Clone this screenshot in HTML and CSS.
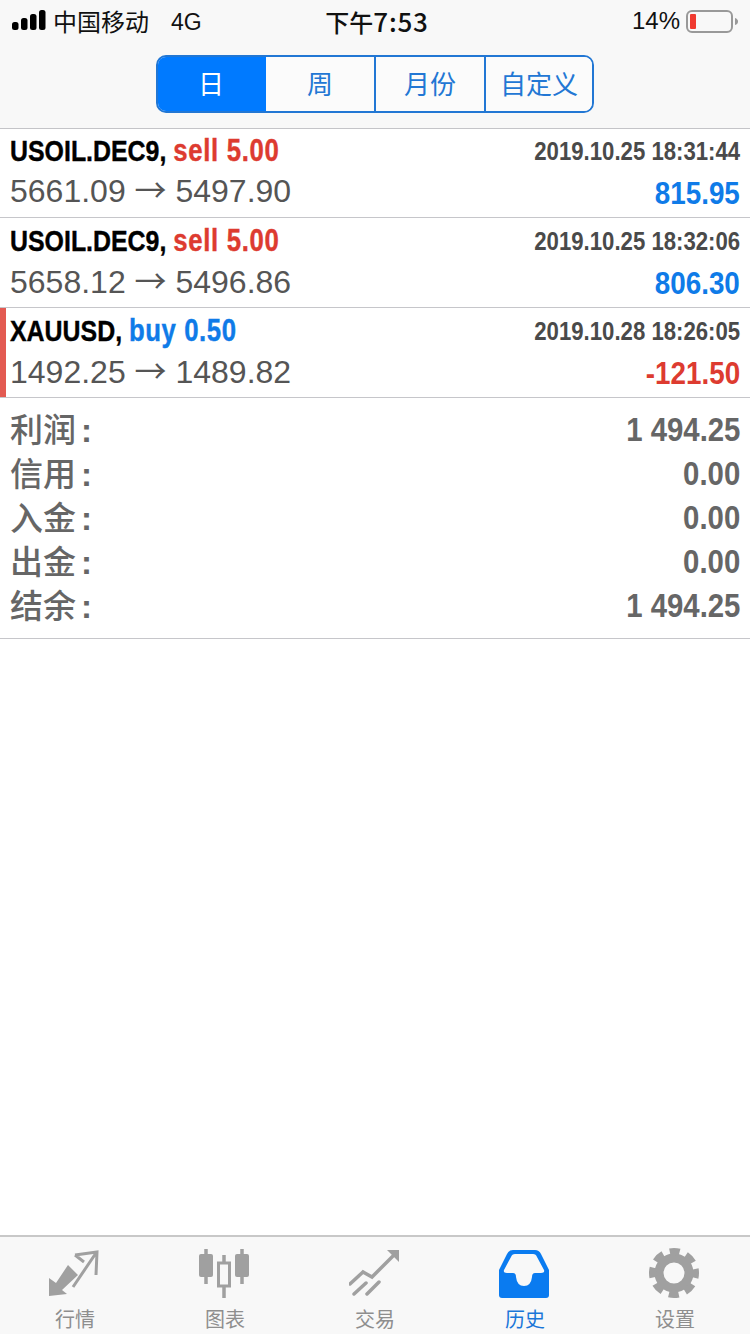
FILE: index.html
```html
<!DOCTYPE html>
<html lang="zh">
<head>
<meta charset="utf-8">
<title>历史</title>
<link rel="stylesheet" href="styles.css">
</head>
<body>
<div class="page">
  <header class="top">
    <div class="status">
      <div class="status-left">
        <svg class="signal" width="34" height="20" viewBox="0 0 34 20"><rect x="0" y="12" width="6.500" height="8" rx="2.500"/><rect x="9" y="8" width="6.500" height="12" rx="2.500"/><rect x="18" y="4" width="6.500" height="16" rx="2.500"/><rect x="27" y="0" width="6.500" height="20" rx="2.500"/></svg>
        <span class="carrier">中国移动</span>
        <span class="net">4G</span>
      </div>
      <div class="clock">下午<span class="clock-num">7:53</span></div>
      <div class="status-right">
        <span class="pct">14%</span>
        <svg class="battery" width="54" height="24" viewBox="0 0 54 24"><rect x="1" y="1" width="45" height="21" rx="5" fill="none" stroke="#999" stroke-width="2"/><rect x="4" y="4" width="6" height="15" rx="1" fill="#f03a30"/><path d="M49 8 Q52 9 52 11.500 Q52 14 49 15Z" fill="#999"/></svg>
      </div>
    </div>
    <nav class="seg">
      <div class="seg-item is-active">日</div>
      <div class="seg-item">周</div>
      <div class="seg-item">月份</div>
      <div class="seg-item">自定义</div>
    </nav>
  </header>
  <main class="main">
    <section class="deal">
      <div class="line">
        <div class="title"><b class="sym">USOIL.DEC9,</b> <b class="sell">sell 5.00</b></div>
        <div class="time">2019.10.25 18:31:44</div>
      </div>
      <div class="line">
        <div class="prices">5661.09 <span class="arrow">→</span> 5497.90</div>
        <div class="profit pos">815.95</div>
      </div>
    </section>
    <section class="deal">
      <div class="line">
        <div class="title"><b class="sym">USOIL.DEC9,</b> <b class="sell">sell 5.00</b></div>
        <div class="time">2019.10.25 18:32:06</div>
      </div>
      <div class="line">
        <div class="prices">5658.12 <span class="arrow">→</span> 5496.86</div>
        <div class="profit pos">806.30</div>
      </div>
    </section>
    <section class="deal is-marked">
      <div class="line">
        <div class="title"><b class="sym">XAUUSD,</b> <b class="buy">buy 0.50</b></div>
        <div class="time">2019.10.28 18:26:05</div>
      </div>
      <div class="line">
        <div class="prices">1492.25 <span class="arrow">→</span> 1489.82</div>
        <div class="profit neg">-121.50</div>
      </div>
    </section>
    <section class="summary">
      <div class="sum-row"><span class="sum-label">利润<i class="colon">:</i></span><span class="sum-value">1 494.25</span></div>
      <div class="sum-row"><span class="sum-label">信用<i class="colon">:</i></span><span class="sum-value">0.00</span></div>
      <div class="sum-row"><span class="sum-label">入金<i class="colon">:</i></span><span class="sum-value">0.00</span></div>
      <div class="sum-row"><span class="sum-label">出金<i class="colon">:</i></span><span class="sum-value">0.00</span></div>
      <div class="sum-row"><span class="sum-label">结余<i class="colon">:</i></span><span class="sum-value">1 494.25</span></div>
    </section>
  </main>
  <footer class="tabs">
    <div class="tab">
      <svg class="tab-icon" width="52" height="50" viewBox="49 1248 52 50"><path d="M49 1296V1278L56 1283 68 1265 78 1275 62 1290 67 1294Z" fill="#a0a0a0"/><path d="M75 1255 97 1252 96 1275M96 1253 73 1287M75 1255 84 1262" fill="none" stroke="#a0a0a0" stroke-width="3"/></svg>
      <span class="tab-label">行情</span>
    </div>
    <div class="tab">
      <svg class="tab-icon" width="52" height="50" viewBox="199 1248 52 50"><path d="M206 1249V1284M242 1249V1284M224 1255V1298" stroke="#a0a0a0" stroke-width="3.500" fill="none"/><rect x="199" y="1254" width="14" height="23" rx="2" fill="#a0a0a0"/><rect x="235" y="1254" width="14" height="23" rx="2" fill="#a0a0a0"/><rect x="218.500" y="1263" width="11" height="23" fill="#f8f8f8" stroke="#a0a0a0" stroke-width="3"/></svg>
      <span class="tab-label">图表</span>
    </div>
    <div class="tab">
      <svg class="tab-icon" width="52" height="50" viewBox="349 1248 52 50"><path d="M350 1284 363 1272 372 1277 394 1255M354 1294 366 1283M367 1294 379 1282" fill="none" stroke="#a0a0a0" stroke-width="3.500" stroke-linecap="round"/><path d="M387 1250H399V1262Z" fill="#a0a0a0"/></svg>
      <span class="tab-label">交易</span>
    </div>
    <div class="tab is-active">
      <svg class="tab-icon" width="52" height="50" viewBox="499 1248 52 50"><path d="M513 1250H535Q539 1250 541 1254L549 1270V1295Q549 1298 546 1298H502Q499 1298 499 1295V1270L507 1254Q509 1250 513 1250Z" fill="#0a7bf0"/><path d="M515 1254H533Q536 1254 537 1257L544 1270Q545 1273 541 1273H535Q532 1273 532 1277 531 1286 524 1286 517 1286 516 1277 516 1273 513 1273H507Q503 1273 504 1270L511 1257Q512 1254 515 1254Z" fill="#f8f8f8"/></svg>
      <span class="tab-label">历史</span>
    </div>
    <div class="tab">
      <svg class="tab-icon" width="52" height="50" viewBox="649 1248 52 50"><circle cx="674" cy="1273" r="15" fill="none" stroke="#a0a0a0" stroke-width="9"/><circle cx="674" cy="1273" r="21.500" fill="none" stroke="#a0a0a0" stroke-width="7" stroke-dasharray="10 6.890" stroke-dashoffset="5"/></svg>
      <span class="tab-label">设置</span>
    </div>
  </footer>
</div>
</body>
</html>
```
FILE: styles.css
```css
* { box-sizing: border-box; }
html, body { margin: 0; padding: 0; }
body {
  background: #fff;
  font-family: "Liberation Sans", "Noto Sans CJK SC", sans-serif;
}
.page {
  width: 750px;
  height: 1334px;
  display: flex;
  flex-direction: column;
  overflow: hidden;
}
.top {
  height: 129px;
  background: #f8f8f8;
  border-bottom: 1px solid #c4c4c8;
  flex: none;
}
.status {
  height: 55px;
  padding: 0 10px 15px 12px;
  display: grid;
  grid-template-columns: 1fr auto 1fr;
  align-items: center;
  color: #111;
}
.status-left { display: flex; align-items: center; }
.signal { fill: #000; margin-right: 7px; }
.carrier { font-family: "Noto Sans CJK SC", sans-serif; font-size: 24px; width: 118px; }
.net { font-size: 23px; margin-top: 4px; }
.clock { font-family: "Noto Sans CJK SC", sans-serif; font-size: 24px; font-weight: 500; padding-left: 2px; }
.clock-num { font-size: 26px; letter-spacing: .8px; }
.status-right { display: flex; justify-content: flex-end; align-items: center; margin-top: 2px; }
.pct { font-size: 24px; margin-right: 6px; }
.battery { margin-top: 2px; }
.seg {
  width: 438px;
  height: 58px;
  margin: 0 auto;
  display: flex;
  border: 2px solid #2277d4;
  border-radius: 10px;
  overflow: hidden;
  font-family: "Noto Sans CJK SC", sans-serif;
  font-size: 26px;
  color: #2277d4;
}
.seg-item {
  flex: 0 0 110px;
  display: flex;
  align-items: center;
  justify-content: center;
  padding-bottom: 3px;
  background: #fbfbfb;
  border-right: 2px solid #2277d4;
}
.seg-item:last-child { flex: 1; border-right: 0; }
.seg-item.is-active { background: #007aff; color: #fff; margin: -2px 0 -2px -2px; border-right: 0; }
.main { flex: 1; background: #fff; }
.deal {
  height: 90px;
  padding: 1px 10px 0;
  position: relative;
  display: flex;
  flex-direction: column;
}
.deal:first-child { height: 89px; padding-top: 0; }
.deal::after {
  content: "";
  position: absolute;
  left: 0;
  right: 0;
  bottom: 0;
  height: 1px;
  background: #c6c6ca;
}
.deal.is-marked::before {
  content: "";
  position: absolute;
  left: 0;
  top: 0;
  bottom: 1px;
  width: 6px;
  background: #e35a52;
}
.line {
  height: 44px;
  display: flex;
  justify-content: space-between;
  align-items: center;
}
.line + .line { height: 38px; }
.deal:first-child .line + .line { height: 36px; }
.title {
  font-size: 30px;
  white-space: pre;
  transform: scaleX(.83);
  transform-origin: left center;
  -webkit-text-stroke: .4px currentColor;
}
.sym { color: #000; }
.sell { color: #dd3b30; font-size: 31px; letter-spacing: .8px; }
.buy { color: #0f7be8; font-size: 31px; letter-spacing: .7px; }
.time {
  font-weight: 700;
  font-size: 25px;
  color: #4a4a4a;
  transform: scaleX(.887);
  transform-origin: right center;
}
.prices { font-size: 32px; color: #555; white-space: pre; }
.arrow { font-family: "Noto Sans CJK SC", sans-serif; line-height: 1; }
.profit {
  font-weight: 700;
  font-size: 31px;
  margin-top: 4px;
  transform: scaleX(.897);
  transform-origin: right center;
}
.deal:first-child .profit { margin-top: 5px; }
.pos { color: #0f7be8; }
.neg { color: #dd3b30; }
.summary {
  height: 241px;
  padding: 10px 10px 0;
  border-bottom: 1px solid #c6c6ca;
  color: #666;
}
.sum-row {
  height: 44px;
  display: flex;
  justify-content: space-between;
  align-items: center;
}
.sum-label {
  font-family: "Noto Sans CJK SC", sans-serif;
  font-weight: 500;
  font-size: 33px;
  padding-bottom: 4px;
}
.colon { font-family: "Liberation Sans", sans-serif; font-style: normal; font-weight: 700; margin-left: 5px; }
.sum-value {
  font-weight: 700;
  font-size: 33px;
  transform: scaleX(.89);
  transform-origin: right center;
}
.tabs {
  height: 99px;
  flex: none;
  background: #f8f8f8;
  border-top: 2px solid #c8c8c8;
  display: grid;
  grid-template-columns: repeat(5, 150px);
}
.tab {
  display: flex;
  flex-direction: column;
  align-items: center;
  padding-top: 11px;
  color: #8e8e8e;
}
.tab.is-active { color: #1a76d8; }
.tab-icon { display: block; flex: none; }
.tab-label {
  font-family: "Noto Sans CJK SC", sans-serif;
  font-size: 20px;
  line-height: 28px;
  margin-top: 7px;
}
```
